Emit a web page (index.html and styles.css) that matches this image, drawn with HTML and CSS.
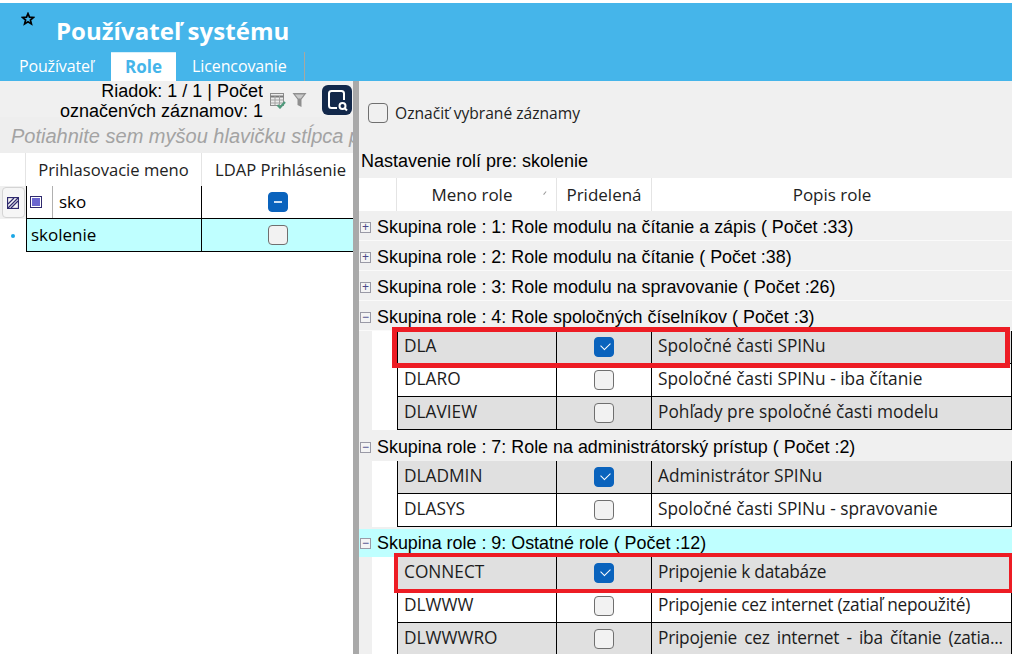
FILE: index.html
```html
<!DOCTYPE html>
<html lang="sk">
<head>
<meta charset="utf-8">
<title>Používateľ systému</title>
<link rel="stylesheet" href="styles.css">
</head>
<body>
<header class="top">
  <div class="title-row">
    <svg class="star" viewBox="0 0 14 14"><path d="M7 1.6 8.5 5.2 12.4 5.5 9.4 8 10.4 11.9 7 9.8 3.6 11.9 4.6 8 1.6 5.5 5.5 5.2Z" fill="none" stroke="#000" stroke-width="1.7" stroke-linejoin="miter"/></svg>
    <h1>Používateľ systému</h1>
  </div>
  <nav class="tabs">
    <span class="tab tab-first">Používateľ</span>
    <span class="tab tab-active">Role</span>
    <span class="tab tab-last">Licencovanie</span>
  </nav>
</header>
<main class="split">
  <section class="left">
    <div class="toolbar">
      <div class="status">Riadok: 1 / 1 | Počet<br>označených záznamov: 1</div>
      <svg class="ico-grid" viewBox="0 0 16 16">
        <rect x="0.5" y="0.5" width="13" height="12" fill="#ececec" stroke="#8c8c8c"/>
        <path d="M0.5 3.5H13.5" stroke="#7a7a7a" stroke-width="2"/>
        <path d="M0.5 7H13.5M0.5 10H13.5M5 3V12.5M9.5 3V12.5" stroke="#a2a2a2" fill="none"/>
        <path d="M7.5 12 10 14.5 15 9" stroke="#4f9a7c" stroke-width="2.2" fill="none"/>
      </svg>
      <svg class="ico-filter" viewBox="0 0 15 16"><path d="M0.5 1H14.5L9.5 7.5V15L5.5 13V7.5Z" fill="#8f8f8f"/><path d="M3 2.6H12L8.8 6.6H6.2Z" fill="#c9c9c9"/></svg>
      <svg class="ico-app" viewBox="0 0 30 30">
        <rect width="30" height="30" rx="6" fill="#12284a"/>
        <path d="M15 23H9.5Q7 23 7 20.5V8.5Q7 6 9.5 6H19.5Q22 6 22 8.5V15" fill="none" stroke="#fff" stroke-width="2"/>
        <circle cx="20.5" cy="21" r="3" fill="none" stroke="#fff" stroke-width="2"/>
        <path d="M22.5 23 25 25.5" stroke="#fff" stroke-width="2"/>
      </svg>
    </div>
    <div class="groupbar">Potiahnite sem myšou hlavičku stĺpca pre zoskupenie</div>
    <div class="ltable">
      <div class="lhead">
        <span class="lgutter"></span>
        <span class="lh lh1">Prihlasovacie meno</span>
        <span class="lh lh2">LDAP Prihlásenie</span>
      </div>
      <div class="lrow">
        <span class="lgutter"><span class="markbtn"><svg viewBox="0 0 12 12" class="markico"><rect x="0.5" y="0.5" width="11" height="11" fill="none" stroke="#2f2a6e" stroke-width="1.3"/><path d="M1 11 11 1M4 11 11 4M1 7 7 1" stroke="#2f2a6e" stroke-width="1.2" fill="none"/></svg></span></span>
        <span class="lc lc1 lc-split"><span class="minicell"><span class="sq"></span></span><span class="sko">sko</span></span>
        <span class="lc lc2"><span class="cb cb-mixed"></span></span>
      </div>
      <div class="lrow lrow-sel">
        <span class="lgutter"><span class="dot"></span></span>
        <span class="lc lc1 lc-sel">skolenie</span>
        <span class="lc lc2 lc-sel"><span class="cb"></span></span>
      </div>
    </div>
  </section>
  <div class="splitter"></div>
  <section class="right">
    <label class="mark-all"><span class="cb cb-plain"></span>Označiť vybrané záznamy</label>
    <div class="settings">Nastavenie rolí pre: skolenie</div>
    <div class="rhead">
      <span class="rh-indent"></span>
      <span class="rh rh1">Meno role<i class="sort"></i></span>
      <span class="rh rh2">Pridelená</span>
      <span class="rh rh3">Popis role</span>
    </div>

    <div class="grp"><span class="tog">+</span>Skupina role : 1: Role modulu na čítanie a zápis ( Počet :33)</div>
    <div class="grp"><span class="tog">+</span>Skupina role : 2: Role modulu na čítanie ( Počet :38)</div>
    <div class="grp"><span class="tog">+</span>Skupina role : 3: Role modulu na spravovanie ( Počet :26)</div>
    <div class="grp"><span class="tog">−</span>Skupina role : 4: Role spoločných číselníkov ( Počet :3)</div>
    <div class="row alt flag flag-a"><span class="c">DLA</span><span class="c cc"><span class="cb cb-on"></span></span><span class="c">Spoločné časti SPINu</span></div>
    <div class="row"><span class="c">DLARO</span><span class="c cc"><span class="cb"></span></span><span class="c">Spoločné časti SPINu - iba čítanie</span></div>
    <div class="row alt"><span class="c">DLAVIEW</span><span class="c cc"><span class="cb"></span></span><span class="c">Pohľady pre spoločné časti modelu</span></div>
    <div class="grp grp-gap"><span class="tog">−</span>Skupina role : 7: Role na administrátorský prístup ( Počet :2)</div>
    <div class="row alt"><span class="c">DLADMIN</span><span class="c cc"><span class="cb cb-on"></span></span><span class="c">Administrátor SPINu</span></div>
    <div class="row"><span class="c">DLASYS</span><span class="c cc"><span class="cb"></span></span><span class="c">Spoločné časti SPINu - spravovanie</span></div>
    <div class="grp grp-gap grp-sel"><span class="tog">−</span>Skupina role : 9: Ostatné role ( Počet :12)</div>
    <div class="row alt flag flag-b"><span class="c">CONNECT</span><span class="c cc"><span class="cb cb-on"></span></span><span class="c c-tight">Pripojenie k databáze</span></div>
    <div class="row"><span class="c">DLWWW</span><span class="c cc"><span class="cb"></span></span><span class="c c-tight">Pripojenie cez internet (zatiaľ nepoužité)</span></div>
    <div class="row alt"><span class="c">DLWWWRO</span><span class="c cc"><span class="cb"></span></span><span class="c c-tight c-just">Pripojenie cez internet - iba čítanie (zatia...</span></div>
  </section>
</main>
</body>
</html>
```

FILE: styles.css
```css
* { box-sizing: border-box; }
html, body { margin: 0; height: 654px; overflow: hidden; background: #fff; }
body { padding-top: 3px; font-family: "Liberation Sans", Arial, sans-serif; color: #000; }

.top { height: 78px; background: #45b5ea; display: flex; flex-direction: column; }
.title-row { height: 49px; display: flex; padding-left: 21px; }
.star { width: 14px; height: 14px; margin-top: 9px; }
h1 { margin: 13px 0 0 21px; font: 700 24px/30px "Open Sans", sans-serif; color: #fff; letter-spacing: 0.05px; }
.tabs { height: 29px; display: flex; font: 16px/28px "Open Sans", sans-serif; color: #fff; }
.tab { display: block; }
.tab-first { width: 111px; padding-left: 19px; letter-spacing: -0.15px; }
.tab-active { width: 65px; background: #fff; color: #45b5ea; font-size: 17px; font-weight: 700; text-align: center; border-top: 1px solid #d8f0fb; }
.tab-last { width: 129px; padding-left: 16px; border-right: 1px solid #a8a8a0; letter-spacing: -0.1px; }

.split { display: flex; height: 573px; background: #f0f0f0; }
.left { width: 353px; flex: none; overflow: hidden; }
.splitter { width: 6px; flex: none; background: #a9a9a9; }
.right { flex: 1; min-width: 0; }

.toolbar { height: 36px; display: flex; overflow: hidden; background: #f0f0f0; }
.status { width: 263px; flex: none; text-align: right; font-size: 18px; line-height: 20px; height: 36px; overflow: hidden; }
.ico-grid { width: 16px; height: 16px; margin: 12px 0 0 7px; }
.ico-filter { width: 15px; height: 16px; margin: 11px 0 0 6px; }
.ico-app { width: 30px; height: 30px; margin: 4px 0 0 15px; }

.groupbar { height: 36px; background: #eeeeee; color: #a3a3a3; font-size: 20px; font-style: italic; line-height: 39px; padding-left: 11px; white-space: nowrap; overflow: hidden; }

.ltable { background: #fff; height: 501px; }
.lhead { height: 33px; display: flex; font: 16.6px/33px "Open Sans", sans-serif; color: #222; background: #fff; }
.lgutter { width: 26px; flex: none; display: flex; align-items: center; justify-content: center; background: #f0f0f0; }
.lhead .lgutter { background: #fff; border-right: 1px solid #e4e4e4; }
.lh { text-align: center; white-space: nowrap; }
.lh1 { width: 176px; border-right: 1px solid #e4e4e4; }
.lh2 { width: 151px; padding-left: 6px; }
.lrow { height: 33px; display: flex; font: 17px/29px "Open Sans", sans-serif; }
.lrow-sel .lgutter { background: #fff; }
.lc { border-bottom: 1px solid #000; border-left: 1px solid #000; display: flex; align-items: center; background: #fff; padding-bottom: 2px; }
.lc1 { width: 175px; padding-left: 4px; }
.lc2 { width: 152px; justify-content: center; padding-bottom: 0; }
.lc-split { padding: 0; }
.lc-sel { background: #bfffff; }
.minicell { width: 26px; height: 32px; display: flex; align-items: center; padding-left: 3px; border-right: 1px solid #b0b0b0; }
.sq { width: 12px; height: 12px; border: 1px solid #2f2a6e; background: #6a66cf; box-shadow: inset 0 0 0 1px #fff; }
.sko { padding-left: 6px; padding-bottom: 2px; }
.markbtn { width: 23px; height: 31px; border: 1px solid #d4d4d4; border-radius: 4px; display: flex; align-items: center; justify-content: center; background: #f6f6f6; }
.markico { width: 12px; height: 12px; }
.dot { width: 4px; height: 4px; border-radius: 50%; background: #1aa7e6; }

.cb { width: 20px; height: 20px; border-radius: 4px; border: 1px solid #6f6f6f; background: #f2f2f2; display: block; position: relative; flex: none; }
.cb-plain { background: #f0f0f0; }
.cb-on, .cb-mixed { background: #0a63bd; border-color: #0a63bd; }
.cb-on::after { content: ""; position: absolute; left: 5.5px; top: 4px; width: 8px; height: 5px; border-left: 1px solid #fff; border-bottom: 1px solid #fff; transform: rotate(-45deg); }
.cb-mixed::after { content: ""; position: absolute; left: 5px; top: 8px; width: 8px; height: 2px; background: #cfe2f5; }

.mark-all { height: 62px; display: flex; align-items: center; padding: 2px 0 0 9px; gap: 7px; font: 15.6px "Open Sans", sans-serif; color: #222; }
.settings { height: 35px; padding: 8px 0 0 2px; font-size: 18px; line-height: 20px; }
.rhead { height: 33px; display: flex; background: #fff; font: 17px/34px "Open Sans", sans-serif; color: #222; }
.rh-indent { width: 38px; border-right: 1px solid #e4e4e4; background: #fff; }
.rh { text-align: center; border-right: 1px solid #e4e4e4; display: block; position: relative; }
.rh1 { width: 160px; padding-right: 9px; }
.rh2 { width: 95px; }
.rh3 { flex: 1; border-right: 0; }
.sort { position: absolute; right: 8px; top: 14px; width: 4px; height: 4px; border-top: 1px solid #999; transform: rotate(-50deg); }

.grp { height: 30px; display: flex; align-items: center; padding: 3px 0 0 1px; font-size: 17.9px; white-space: nowrap; border-bottom: 1px solid #fafafa; }
.grp-gap { margin-top: 2px; height: 29px; border-bottom: 0; padding-top: 1px; }
.grp-sel { height: 28px; background: #bfffff; }
.tog { width: 11px; height: 11px; margin-right: 6px; border: 1px solid #9a9aa6; background: #f4f4f4; color: #4a4a88; font: 400 12px/9px "Liberation Sans", sans-serif; text-align: center; flex: none; }

.row { height: 33px; margin-left: 13px; border-left: 25px solid #fff; display: grid; grid-template-columns: 159px 95px 361px; font: 17.3px/29px "Open Sans", sans-serif; position: relative; color: #1c1c1c; }
.c { border-left: 1px solid #000; border-bottom: 1px solid #000; background: #fff; padding-left: 6px; white-space: nowrap; overflow: hidden; display: block; }
.c:last-child { border-right: 1px solid #000; }
.alt .c { background: #e0e0e0; }
.cc { padding: 0; display: flex; align-items: center; justify-content: center; }
.c-tight { letter-spacing: -0.25px; }
.c-just { word-spacing: 3px; }
.flag { z-index: 1; }
.flag::after { content: ""; position: absolute; border: 5px solid #ed1c24; pointer-events: none; }
.flag-a::after { left: -5px; right: 2px; top: -4px; bottom: -4px; }
.flag-b::after { left: -3px; right: -1px; top: -4px; bottom: -3px; border-width: 4px; }
```
